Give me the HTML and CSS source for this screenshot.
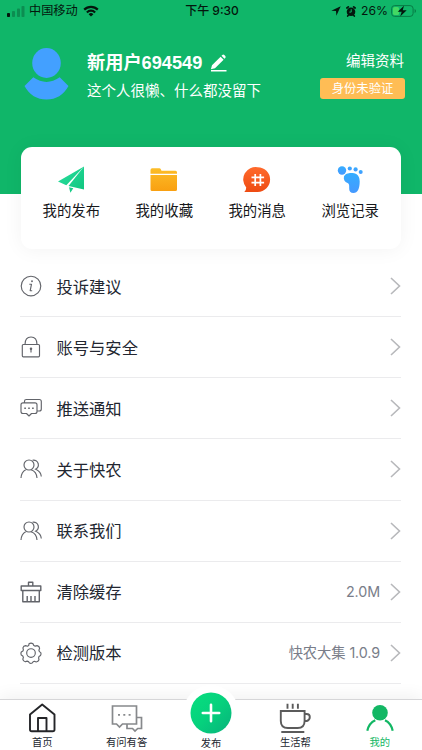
FILE: index.html
```html
<!DOCTYPE html>
<html lang="zh-CN">
<head>
<meta charset="utf-8">
<title>我的</title>
<link rel="stylesheet" href="styles.css">
</head>
<body>
<div class="screen">
  <header class="hero">
    <div class="status">
      <div class="status-side">
        <svg class="signal" width="18" height="11" viewBox="0 0 18 11"><rect x="0" y="7" width="3" height="4" rx=".8"/><g opacity=".25"><rect x="5" y="5" width="3" height="6" rx=".8"/><rect x="10" y="2.500" width="3" height="8.500" rx=".8"/><rect x="14.500" y="0" width="3" height="11" rx=".8"/></g></svg>
        <span class="carrier">中国移动</span>
        <svg class="wifi" width="16" height="12" viewBox="0 0 16 12"><g fill="none" stroke="#04160d" stroke-width="2.200"><path d="M1.200 4.600A9.600 9.600 0 0 1 14.800 4.600"/><path d="M3.900 7.400A5.700 5.700 0 0 1 12.100 7.400"/></g><path d="M5.600 9.200a3.400 3.400 0 0 1 4.800 0L8 11.600z"/></svg>
      </div>
      <span class="clock">下午 9:30</span>
      <div class="status-side end">
        <svg width="10" height="10" viewBox="0 0 10 10"><path d="M9.700.3.300 4.700 5 5.100 5.400 9.700z"/></svg>
        <svg class="alarm" width="10" height="11" viewBox="0 0 10 11"><circle cx="5" cy="5.800" r="4.300"/><path d="M.9 2 2.300.9M9.100 2 7.700.9M1.700 10l1.100-1.200M8.300 10 7.200 8.800" stroke="#04160d" stroke-width="1.700" stroke-linecap="round"/><path d="M5.200 3.200v2.900H3.300" fill="none" stroke="#10b669"/></svg>
        <span class="percent">26%</span>
        <svg width="26" height="12" viewBox="0 0 26 12"><rect x=".6" y=".6" width="21.500" height="10.800" rx="3" fill="none" stroke="#087b45" stroke-width="1"/><rect x="2" y="2" width="6" height="8" rx="1.500" fill="#43d863"/><path d="M23.600 4v4q1.400-.6 1.400-2t-1.400-2z" fill="#087b45"/><path d="M13 .7 6.700 6.700h4l-1.500 4.700 6.500-6.100h-4z"/></svg>
      </div>
    </div>
    <div class="profile">
      <svg class="avatar" width="46" height="52" viewBox="0 0 46 52" fill="#43a0ff"><ellipse cx="22.500" cy="15" rx="14.300" ry="15"/><path d="M9.300 29.300Q22.500 38.500 35.700 29.300L44.500 38Q37 51.500 22.500 51.500T.5 38z"/></svg>
      <div class="identity">
        <div class="name"><span>新用户694549</span>
          <svg width="17" height="18" viewBox="0 0 17 18" fill="#fff"><path d="M2 11.300 10.600 2.700l3 3L5 14.300.900 15.300zM11.500 1.800l.8-.8q1-.8 2 0l1 1q.8 1 0 2l-.8.8zM1 16h15.500v1.500H1z"/></svg>
        </div>
        <p class="bio">这个人很懒、什么都没留下</p>
      </div>
      <div class="account">
        <span class="edit">编辑资料</span>
        <span class="verify">身份未验证</span>
      </div>
    </div>
  </header>

  <nav class="card">
    <a class="quick">
      <svg width="28" height="28" viewBox="0 0 28 28"><defs><linearGradient id="plane" x2="1" y2="1"><stop stop-color="#2be0a0"/><stop offset="1" stop-color="#0fc47d"/></linearGradient></defs><path d="M27 .5 1 15.500l8.300 3.800zM27 .5 11.500 20 27 23.500zM12 21.200l4.300 1-2.900 4.500z" fill="url(#plane)"/></svg>
      <span>我的发布</span>
    </a>
    <a class="quick">
      <svg width="28" height="28" viewBox="0 0 28 28"><defs><linearGradient id="folder" x2="0" y2="1"><stop stop-color="#fcbd28"/><stop offset="1" stop-color="#f9a011"/></linearGradient></defs><path d="M.5 7.800V4q0-1.700 1.700-1.700h7.200q1 0 1.400 1l.7 1.400h14q1.500 0 1.500 1.500v1.600zM.5 9h26.500v14.500q0 1.500-1.500 1.500H2Q.5 25 .5 23.500z" fill="url(#folder)"/></svg>
      <span>我的收藏</span>
    </a>
    <a class="quick">
      <svg width="28" height="28" viewBox="0 0 28 28"><defs><linearGradient id="message" x2="0" y2="1"><stop stop-color="#ff6a2c"/><stop offset="1" stop-color="#ee4b12"/></linearGradient></defs><path d="M14.700 1.200A12.400 12.400 0 0 1 14.700 26H1.300q2-1.600 1.900-4.500A12.400 12.400 0 0 1 14.700 1.200z" fill="url(#message)"/><path d="M12.200 8v12M17.400 8v12M8.500 11.300h12.600M8.500 16.700h12.600" stroke="#fff" stroke-width="1.700" fill="none"/></svg>
      <span>我的消息</span>
    </a>
    <a class="quick">
      <svg width="28" height="28" viewBox="0 0 28 28"><defs><linearGradient id="foot" x2="0" y2="1"><stop stop-color="#35adff"/><stop offset="1" stop-color="#4599ff"/></linearGradient></defs><g fill="url(#foot)"><circle cx="6" cy="4.500" r="4.200"/><circle cx="13.800" cy="2.500" r="2.100"/><circle cx="19.600" cy="3.400" r="2.100"/><circle cx="24.700" cy="5.900" r="2"/><path d="M8 10.500C9 7.500 13 6.700 16.500 7c5 .4 7.200 3.300 7.200 8.500 0 7-2 11.500-6.200 11.500-3 0-4.500-2-4.300-4.500.1-3.500 0-4.700-1.700-5.500C8.700 15.800 7.200 13.500 8 10.500z"/></g></svg>
      <span>浏览记录</span>
    </a>
  </nav>

  <main class="list">
    <a class="row">
      <svg class="icon" viewBox="0 0 22 22"><circle cx="11" cy="11" r="9.800"/><path d="M9.300 9.200h2.200l-1.300 6.500h2"/><circle cx="12" cy="6.200" r=".4"/></svg>
      <span class="label">投诉建议</span><svg class="chevron" viewBox="0 0 11 18"><path d="m1 1 8.500 8L1 17"/></svg>
    </a>
    <a class="row">
      <svg class="icon" viewBox="0 0 22 22"><rect x="2.300" y="8.500" width="17.200" height="12.300" rx="1"/><path d="M5 8.500C5 3.500 7.500 1 11 1s6 2.500 6 7.500M11 13v3.500"/><circle cx="11" cy="12.800" r=".7"/></svg>
      <span class="label">账号与安全</span><svg class="chevron" viewBox="0 0 11 18"><path d="m1 1 8.500 8L1 17"/></svg>
    </a>
    <a class="row">
      <svg class="icon" viewBox="0 0 22 22"><path d="M3 5.800h12q2 0 2 2v6.700q0 2-2 2h-3.500l-2.500 2.500-2.500-2.500H3q-2 0-2-2V7.800q0-2 2-2zM4.500 5.800V4.300q0-1.800 1.800-1.800h13q2 0 2 2v7.500q0 2-2 2H17"/><path d="M4.300 11.200h1.600M8.200 11.200h1.600M12.100 11.200h1.600" stroke-width="1.600"/></svg>
      <span class="label">推送通知</span><svg class="chevron" viewBox="0 0 11 18"><path d="m1 1 8.500 8L1 17"/></svg>
    </a>
    <a class="row">
      <svg class="icon" viewBox="0 0 22 22"><circle cx="9" cy="7" r="5"/><path d="M1 20c.2-4 1.500-6.500 4.700-8.300M11 11.800c4 1.200 5.700 4 6 8.200M12.500 2.300a4.600 4.600 0 1 1 2.300 9.200M16.300 11.500c3 1.500 4.700 3.500 5 7"/></svg>
      <span class="label">关于快农</span><svg class="chevron" viewBox="0 0 11 18"><path d="m1 1 8.500 8L1 17"/></svg>
    </a>
    <a class="row">
      <svg class="icon" viewBox="0 0 22 22"><circle cx="9" cy="7" r="5"/><path d="M1 20c.2-4 1.500-6.500 4.700-8.300M11 11.800c4 1.200 5.700 4 6 8.200M12.500 2.300a4.600 4.600 0 1 1 2.300 9.200M16.300 11.500c3 1.500 4.700 3.500 5 7"/></svg>
      <span class="label">联系我们</span><svg class="chevron" viewBox="0 0 11 18"><path d="m1 1 8.500 8L1 17"/></svg>
    </a>
    <a class="row">
      <svg class="icon bin" viewBox="0 0 22 22"><path d="M1.200 5h19.600v4.500H1.200zM8.500 5V1.300h4.300V5M2.800 9.500v11.200h16.500V9.500M7.200 15v5.500M11 15v5.500M15 15v5.500"/></svg>
      <span class="label">清除缓存</span><span class="value">2.0M</span><svg class="chevron" viewBox="0 0 11 18"><path d="m1 1 8.500 8L1 17"/></svg>
    </a>
    <a class="row">
      <svg class="icon" viewBox="0 0 22 22"><circle cx="11" cy="11" r="4.300"/><path d="M9 1.800q2-1.300 4 0l.8 1.700 1.400.6 1.900-.5q2.300.5 2.500 2.800l-.7 1.800.5 1.400 1.400 1q.5 1.500-.3 2.900l-1.500 1-.4 1.300.4 2q-.7 2-2.800 2.200l-1.800-.7-1.300.5-.9 1.200q-1.400.6-2.700 0l-1-1.400-1.400-.5-1.800.7q-2.200-.5-2.500-2.600l.6-1.800-.6-1.400-1.500-.9q-.7-1.500 0-3l1.600-1 .5-1.300-.5-1.900q.6-2 2.700-2.300l1.900.6 1.200-.6z"/></svg>
      <span class="label">检测版本</span><span class="value">快农大集 1.0.9</span><svg class="chevron" viewBox="0 0 11 18"><path d="m1 1 8.500 8L1 17"/></svg>
    </a>
  </main>

  <footer class="tabs">
    <a class="tab"><svg width="30" height="30" viewBox="0 0 30 30" fill="none" stroke="#242528" stroke-width="1.900" stroke-linejoin="round"><path d="M3 11.500 15.200 1.500 27.500 11.500v15q0 1.800-1.800 1.800H4.800Q3 28.300 3 26.500zM11 28V15h8.500v13"/></svg><span>首页</span></a>
    <a class="tab"><svg width="34" height="30" viewBox="0 0 34 30" fill="none" stroke="#87898c" stroke-width="1.700"><path d="M2.500 3h24v18H12.500L9.500 24l-3-3h-4zM26.500 14.500h5v11h-3.800L25 28l-2.500-2.500H17V21"/><path d="M8 11.800h2M13.300 11.800h2M18.600 11.800h2"/></svg><span>有问有答</span></a>
    <a class="tab publish"><span class="bubble"><svg width="42" height="42" viewBox="0 0 42 42"><defs><linearGradient id="publish" x2="1" y2="1"><stop stop-color="#08df7f"/><stop offset=".5" stop-color="#06d17d"/><stop offset="1" stop-color="#08b27b"/></linearGradient></defs><circle cx="21" cy="21" r="20.500" fill="url(#publish)"/><path d="M21 12.800v16.400M12.800 21h16.400" stroke="#fff" stroke-width="2.600" stroke-linecap="round"/></svg></span><span>发布</span></a>
    <a class="tab"><svg width="34" height="30" viewBox="0 0 34 30" fill="none" stroke="#5b5b5b" stroke-width="1.900"><path d="M2.800 8h23.800v10q0 7-7 7h-9.800q-7 0-7-7zM26.600 11h2q3.200 0 3.200 3t-3 4h-2.200M9.500.8v5M14.700.8v5M19.900.8v5M3.300 29h23"/></svg><span>生活帮</span></a>
    <a class="tab active"><svg width="30" height="30" viewBox="0 0 30 30"><circle cx="15" cy="9.800" r="7.800" fill="#12b764"/><path d="M2.300 27.700Q4 20 10.300 17.200M20 17.200q6 2.800 7.700 10.500" fill="none" stroke="#12b764" stroke-width="2.200"/></svg><span>我的</span></a>
  </footer>
</div>
</body>
</html>
```
FILE: styles.css
```css
* { box-sizing: border-box; }
body {
  margin: 0;
  font-family: Inter, "Noto Sans CJK SC", sans-serif;
  color: #222630;
}
p { margin: 0; }
svg { display: block; flex: none; }
.screen {
  display: flex;
  flex-direction: column;
  height: 750px;
  overflow: hidden;
  background: #fff;
}
.hero { flex: none; height: 194px; background: #10b669; }
.status {
  display: grid;
  grid-template-columns: 1fr auto 1fr;
  align-items: center;
  height: 22px;
  padding: 0 5px 0 7px;
  font-size: 12.2px;
  line-height: 20px;
  color: #04160d;
  fill: #04160d;
}
.status-side { display: flex; align-items: center; }
.end { justify-content: flex-end; gap: 5px; }
.signal { margin: 0 4px 0 0; }
.wifi { margin-left: 5px; }
.percent { margin-right: -2px; }
.clock { font-size: 12px; font-weight: 500; }
.profile {
  display: flex;
  align-items: flex-start;
  padding: 26px 17px 0 24px;
  color: #fff;
}
.identity { margin-left: 17px; padding-top: 2px; }
.name {
  display: flex;
  align-items: center;
  gap: 8px;
  height: 26px;
  font: bold 18.2px/26px "Liberation Sans", "Noto Sans CJK SC", sans-serif;
}
.bio { margin-top: 1px; font-size: 14.5px; line-height: 28px; white-space: nowrap; }
.account {
  display: flex;
  flex-direction: column;
  align-items: flex-end;
  margin-left: auto;
}
.edit { font-size: 14.500px; line-height: 26px; margin-right: 1px; }
.verify {
  width: 85px;
  height: 21px;
  margin-top: 4px;
  border-radius: 3px;
  background: #ffbd55;
  font-size: 12.300px;
  line-height: 21px;
  text-align: center;
}
.card {
  display: flex;
  justify-content: space-between;
  flex: none;
  height: 102px;
  margin: -47px 21px 0 20.5px;
  padding: 19px 22px 0;
  border-radius: 11px;
  background: #fff;
  box-shadow: 0 1px 20px rgba(0, 0, 0, .05);
}
.quick {
  display: flex;
  flex-direction: column;
  align-items: center;
  font-size: 14.4px;
  line-height: 22px;
  color: #17181b;
}
.quick span { margin-top: 6px; }
.list { flex: none; padding: 7px 21px 0 20px; }
.row {
  display: flex;
  align-items: center;
  height: 61.150px;
  border-bottom: 1px solid #ebebed;
}
.icon {
  width: 22px;
  height: 22px;
  fill: none;
  stroke: #62646a;
  stroke-width: 1.150;
  stroke-linejoin: round;
}
.bin { stroke-width: 1.400; }
.label { margin-left: 14.5px; padding-top: 1px; font-size: 16.300px; line-height: 24px; }
.chevron {
  width: 11px;
  height: 18px;
  margin-left: auto;
  fill: none;
  stroke: #b7b8bb;
  stroke-width: 1.600;
}
.value {
  margin-left: auto;
  font-size: 14.300px;
  line-height: 22px;
  letter-spacing: -.1px;
  color: #797d89;
}
.value + .chevron { margin-left: 10px; }
.tabs {
  display: grid;
  grid-template-columns: repeat(5, 1fr);
  flex: none;
  height: 51px;
  margin-top: 15px;
  border-top: 1px solid #d6d6d8;
  background: #fff;
  box-shadow: 0 -3px 16px rgba(0, 0, 0, .06);
}
.tab {
  display: flex;
  flex-direction: column;
  align-items: center;
  padding-top: 3px;
  font-size: 10.300px;
  line-height: 14px;
}
.tab > span:last-child { margin-top: 2px; }
.bubble {
  display: grid;
  place-items: center;
  width: 56px;
  height: 56px;
  margin-top: -18px;
  margin-bottom: -7px;
  border-radius: 50%;
  background: #fff;
}
.active { color: #12b764; }
```
